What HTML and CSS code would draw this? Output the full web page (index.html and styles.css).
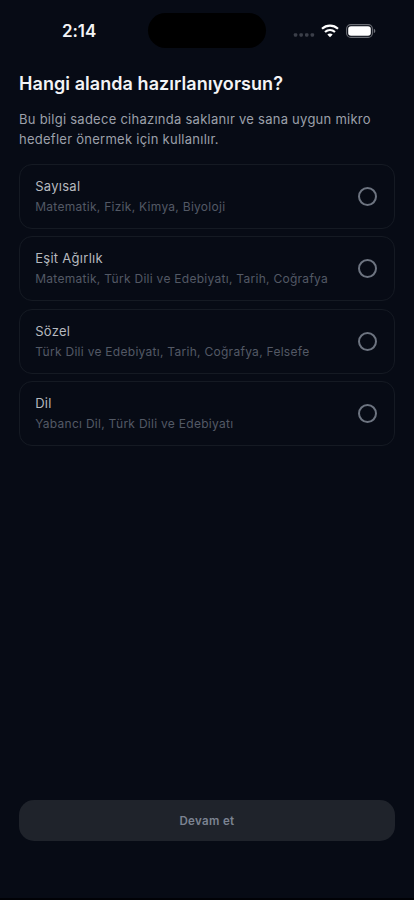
FILE: index.html
```html
<!DOCTYPE html>
<html lang="tr">
<head>
<meta charset="utf-8">
<meta name="viewport" content="width=device-width, initial-scale=1">
<title>Alan seçimi</title>
<link rel="stylesheet" href="styles.css">
</head>
<body>
<div class="screen">
  <header class="status">
    <div class="status-time"><span>2:14</span></div>
    <div class="island"></div>
    <div class="status-icons">
      <svg class="signal" width="22" height="4" viewBox="0 0 22 4"><g fill="#3b3f49"><rect x="0.8" y="0.2" width="3.5" height="3.5" rx="1.1"/><rect x="6.4" y="0.2" width="3.5" height="3.5" rx="1.1"/><rect x="12" y="0.2" width="3.5" height="3.5" rx="1.1"/><rect x="17.6" y="0.2" width="3.5" height="3.5" rx="1.1"/></g></svg>
      <svg class="wifi" width="18" height="14" viewBox="0 0 18 14"><g fill="none" stroke="#fff" stroke-width="2.2"><path d="M1 4.7C5.6.5 12.400.5 17 4.700"/><path d="M4 8c2.900-2.600 7.100-2.600 10 0"/></g><path d="M9 13.300 6.300 10.600c1.500-1.400 3.900-1.400 5.400 0z" fill="#fff"/></svg>
      <svg class="battery" width="30" height="14" viewBox="0 0 30 14"><rect x=".6" y=".6" width="25.8" height="12.8" rx="4.2" fill="none" stroke="#6a6d74" stroke-width="1.1"/><rect x="2.2" y="2.2" width="22.6" height="9.6" rx="2.8" fill="#fff"/><path d="M27.8 4.8c2 .7 2 3.700 0 4.400z" fill="#70737a"/></svg>
    </div>
  </header>
  <main class="content">
    <h1>Hangi alanda hazırlanıyorsun?</h1>
    <p class="intro">Bu bilgi sadece cihazında saklanır ve sana uygun mikro<br>hedefler önermek için kullanılır.</p>
    <div class="options">
      <div class="option"><div><h2>Sayısal</h2><p>Matematik, Fizik, Kimya, Biyoloji</p></div><span class="radio"></span></div>
      <div class="option"><div><h2>Eşit Ağırlık</h2><p>Matematik, Türk Dili ve Edebiyatı, Tarih, Coğrafya</p></div><span class="radio"></span></div>
      <div class="option"><div><h2>Sözel</h2><p>Türk Dili ve Edebiyatı, Tarih, Coğrafya, Felsefe</p></div><span class="radio"></span></div>
      <div class="option"><div><h2>Dil</h2><p>Yabancı Dil, Türk Dili ve Edebiyatı</p></div><span class="radio"></span></div>
    </div>
  </main>
  <footer><button class="continue" disabled>Devam et</button></footer>
</div>
</body>
</html>
```
FILE: styles.css
```css
* { box-sizing: border-box; }
body { margin: 0; background: #070b15; font-family: Inter, "Liberation Sans", sans-serif; color: #f3f4f6; }
h1, h2, p { margin: 0; }
.screen { height: 900px; display: flex; flex-direction: column; border-bottom: 2px solid #010206; overflow: hidden; }
.status { height: 62px; display: grid; grid-template-columns: 148px 118px 148px; align-items: center; flex: none; }
.status-time { padding-left: 62px; font-size: 17px; font-weight: 600; line-height: 20px; letter-spacing: -.1px; }
.island { height: 35px; margin-bottom: 1px; border-radius: 18px; background: #000; }
.status-icons { display: flex; align-items: center; padding-left: 27px; }
.signal { margin-top: 8px; }
.wifi { margin-left: 6px; }
.battery { margin-left: 7px; }
.content { flex: 1; padding: 9px 19px 0; white-space: nowrap; }
h1 { font-size: 18px; line-height: 25px; font-weight: 600; letter-spacing: .06px; }
.intro { margin-top: 13px; font-size: 13px; line-height: 20px; letter-spacing: .26px; color: #9ca0aa; }
.options { margin-top: 15px; display: flex; flex-direction: column; gap: 7.4px; }
.option { height: 65px; border: 1px solid #151a23; border-radius: 13px; padding: 0 17px 0 15.2px; display: flex; align-items: center; justify-content: space-between; }
h2 { font-size: 13px; line-height: 19px; font-weight: 400; letter-spacing: .28px; color: #b6b9bf; }
.option p { margin-top: 2px; font-size: 12px; line-height: 18px; letter-spacing: .28px; color: #535965; }
.radio { width: 19px; height: 19px; border: 2px solid #6d7480; border-radius: 50%; }
footer { padding: 0 19px 57px; }
.continue { display: block; width: 100%; height: 41px; border: 0; border-radius: 15px; background: #1f232b; color: #7c8392; font: 600 11.5px Inter, "Liberation Sans", sans-serif; letter-spacing: .35px; }
```
